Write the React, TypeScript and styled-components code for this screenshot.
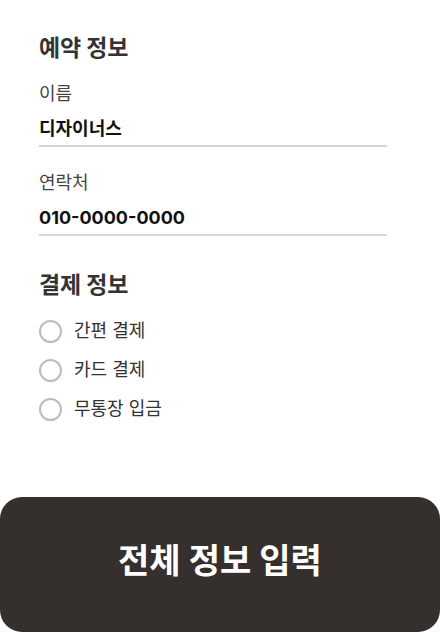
import React from 'react'
import styled, { createGlobalStyle } from 'styled-components'

const GlobalStyle = createGlobalStyle`
  html, body {
    margin: 0;
    padding: 0;
    background: #ffffff;
  }
  body {
    font-family: Inter, 'Noto Sans CJK KR', 'Noto Sans', sans-serif;
    color: #333;
  }
`

const PAYMENT_METHODS = ['간편 결제', '카드 결제', '무통장 입금']

const Page = styled.div`
  width: 440px;
  height: 632px;
  display: flex;
  flex-direction: column;
  overflow: hidden;
`

const Form = styled.div`
  flex: 1;
  padding: 32px 53px 0 39px;
`

const Section = styled.section`
  & + & {
    margin-top: 33px;
  }
`

const SectionTitle = styled.h2`
  margin: 0 0 18px;
  font-size: 23px;
  line-height: 32px;
  font-weight: 700;
  color: #333;
  letter-spacing: -0.2px;
`

const Field = styled.div`
  & + & {
    margin-top: 24px;
  }
`

const FieldLabel = styled.div`
  font-size: 18px;
  line-height: 24px;
  color: #444;
  margin-bottom: 10px;
`

const FieldValue = styled.div`
  font-size: 18px;
  line-height: 26px;
  font-weight: 700;
  color: #111;
  padding-bottom: 3px;
  border-bottom: 2px solid #d6d6d6;
`

const RadioList = styled.div`
  display: flex;
  flex-direction: column;
  gap: 15px;
  margin-top: 1px;
`

const RadioRow = styled.label`
  display: flex;
  align-items: center;
  gap: 12px;
  height: 24px;
  font-size: 18px;
  line-height: 24px;
  color: #333;
`

const RadioCircle = styled.span`
  box-sizing: border-box;
  width: 23px;
  height: 23px;
  border-radius: 50%;
  border: 2px solid #bcbcbc;
  background: #fff;
  flex-shrink: 0;
`

const SubmitButton = styled.button`
  display: flex;
  align-items: center;
  justify-content: center;
  width: 440px;
  height: 135px;
  border: none;
  border-radius: 22px;
  background: #35302d;
  color: #fff;
  font-family: inherit;
  font-size: 34px;
  font-weight: 700;
  padding: 0 0 12px;
`

export default function App() {
  return (
    <Page>
      <GlobalStyle />
      <Form>
        <Section>
          <SectionTitle>예약 정보</SectionTitle>
          <Field>
            <FieldLabel>이름</FieldLabel>
            <FieldValue>디자이너스</FieldValue>
          </Field>
          <Field>
            <FieldLabel>연락처</FieldLabel>
            <FieldValue>010-0000-0000</FieldValue>
          </Field>
        </Section>
        <Section>
          <SectionTitle>결제 정보</SectionTitle>
          <RadioList>
            {PAYMENT_METHODS.map((method) => (
              <RadioRow key={method}>
                <RadioCircle />
                {method}
              </RadioRow>
            ))}
          </RadioList>
        </Section>
      </Form>
      <SubmitButton>전체 정보 입력</SubmitButton>
    </Page>
  )
}
